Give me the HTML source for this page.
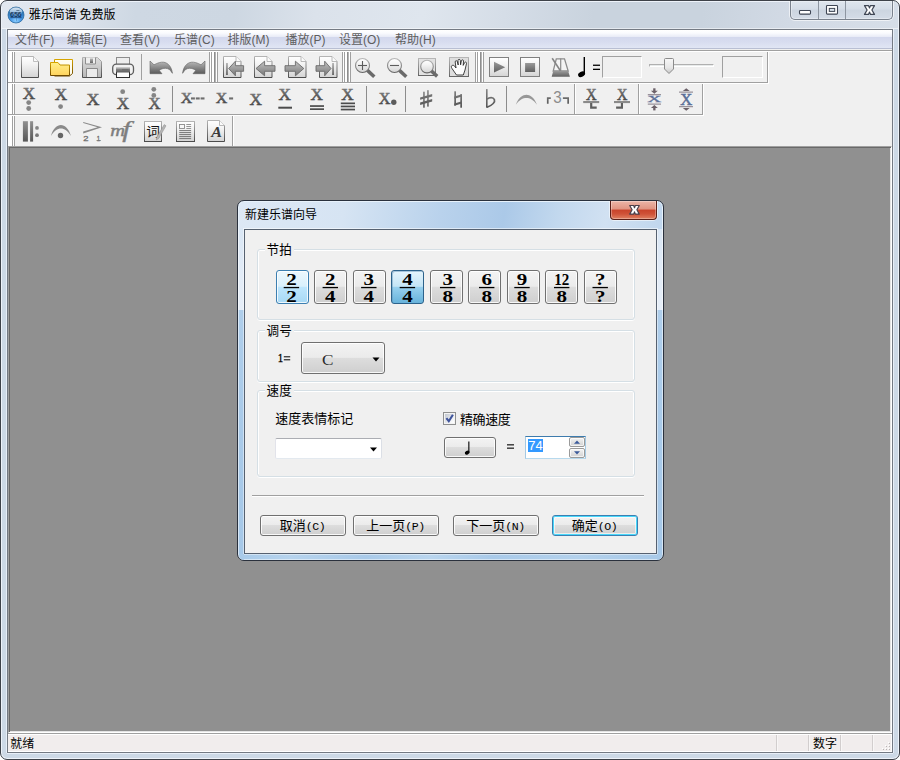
<!DOCTYPE html><html><head><meta charset="utf-8"><title>UI</title><style>
html,body{margin:0;padding:0;background:#fff;}
body{width:900px;height:760px;overflow:hidden;position:relative;font-family:"Liberation Sans",sans-serif;}
#r{position:absolute;left:0;top:0;width:900px;height:760px;overflow:hidden;}
#r>div{position:absolute;}
#ov{position:absolute;left:0;top:0;}
#ov text{font-family:"Liberation Sans","Noto Sans CJK SC",sans-serif;}
#ov text.sf{font-family:"Liberation Serif","Noto Serif CJK SC",serif;}
#ov text.mn{font-family:"Liberation Mono","Noto Sans CJK SC",monospace;}
</style></head><body>
<div id="r"><div style="left:0px;top:0px;width:900px;height:760px;box-sizing:border-box;border:1px solid #3e4249;border-radius:7px;background:#cdd9e6;box-shadow:inset 0 0 0 1px #eef3fa;"></div>
<div style="left:2px;top:2px;width:896px;height:27px;border-radius:5px 5px 0 0;background:linear-gradient(97deg,#e2e8f0 0%,#dce3ec 8%,#ced8e3 15%,#cdd7e2 26%,#dbe2eb 35%,#dfe6ee 47%,#d5dde7 56%,#c9d3de 66%,#c9d3de 78%,#d2dae5 88%,#d6dee8 100%);"></div>
<div style="left:2px;top:28px;width:896px;height:1px;background:rgba(255,255,255,.5);"></div>
<div style="left:6px;top:29px;width:1px;height:724px;background:#e8eff8;"></div>
<div style="left:893px;top:29px;width:1px;height:724px;background:#e8eff8;"></div>
<div style="left:7px;top:753px;width:886px;height:1px;background:#e8eff8;"></div>
<div style="left:7px;top:29px;width:886px;height:724px;box-sizing:border-box;border:1px solid #747a83;background:#f0f0f0;"></div>
<div style="left:787px;top:1px;width:109px;height:22px;overflow:hidden;"><div style="position:absolute;left:3px;top:0;width:103px;height:19px;box-sizing:border-box;border:1px solid #7a828d;border-top:none;border-radius:0 0 5px 5px;background:linear-gradient(#dfe6ee,#d5dde7 45%,#ccd5e0 50%,#d4dce7);box-shadow:0 0 0 1px rgba(255,255,255,.6), inset 0 0 0 1px rgba(255,255,255,.35);"></div></div>
<div style="left:818px;top:1px;width:1px;height:18px;background:#8d95a0;"></div>
<div style="left:845px;top:1px;width:1px;height:18px;background:#8d95a0;"></div>
<div style="left:8px;top:30px;width:884px;height:20px;background:linear-gradient(#ffffff 0,#fafbfe 3px,#e7eaf6 7px,#d3d8ed 7.5px,#d9def0 13px,#e1e6f4 18px,#b9bfd3 18px,#b9bfd3 19px,#efefef 19px);"></div>
<div style="left:8px;top:50px;width:884px;height:1px;background:#a0a0a0;"></div>
<div style="left:8px;top:146px;width:884px;height:587px;box-sizing:border-box;background:#909090;border:1px solid;border-color:#a0a0a0 #fff #fff #a0a0a0;box-shadow:inset 1px 1px 0 0 #696969, inset -1px -1px 0 0 #e3e3e3;"></div>
<div style="left:8px;top:733px;width:884px;height:19px;background:#f1eded;border-top:1px solid #a0a0a0;box-shadow:inset 0 1px 0 0 #fff;box-sizing:border-box;"></div>
<div style="left:237px;top:200px;width:427px;height:361px;box-sizing:border-box;border:1px solid #2a313d;border-radius:7px;background:linear-gradient(100deg,#dde8f5 0%,#d6e4f3 22%,#b9d2ec 42%,#abc9e8 55%,#c2d8ee 66%,#d1e1f2 76%,#c0d6ed 88%,#b4cfea 100%);box-shadow:inset 0 0 0 1px #e8f2fb;"></div>
<div style="left:244px;top:229px;width:413px;height:325px;box-sizing:border-box;border:1px solid #566170;background:#f0f0f0;box-shadow:0 0 0 1px rgba(255,255,255,.55);"></div>
<div style="left:238px;top:229px;width:6px;height:81px;background:linear-gradient(#d9e6f4,#e3ecf7 60%,#e6eef8);"></div>
<div style="left:238px;top:310px;width:6px;height:244px;background:linear-gradient(#afceeb,#a9cae9 50%,#a6c8e8);"></div>
<div style="left:657px;top:229px;width:6px;height:81px;background:linear-gradient(#d9e6f4,#e3ecf7 60%,#e6eef8);"></div>
<div style="left:657px;top:310px;width:6px;height:244px;background:linear-gradient(#afceeb,#a9cae9 50%,#a6c8e8);"></div>
<div style="left:239px;top:554px;width:423px;height:6px;background:linear-gradient(90deg,#a8cae9 0%,#b6d3ed 12%,#a9cae9 30%,#b9d5ee 45%,#a9cae9 60%,#b3d1ec 80%,#a8c9e8 100%);border-radius:0 0 5px 5px;"></div>
<div style="left:238px;top:229px;width:1px;height:325px;background:rgba(255,255,255,.55);"></div>
<div style="left:662px;top:229px;width:1px;height:325px;background:rgba(255,255,255,.55);"></div>
<div style="left:243px;top:229px;width:1px;height:325px;background:rgba(255,255,255,.45);"></div>
<div style="left:657px;top:229px;width:1px;height:325px;background:rgba(255,255,255,.45);"></div>
<div style="left:244px;top:559px;width:413px;height:1px;background:rgba(255,255,255,.5);"></div>
<div style="left:244px;top:554px;width:413px;height:1px;background:rgba(255,255,255,.45);"></div>
<div style="left:776px;top:735px;width:1px;height:16px;background:#d2cece;"></div>
<div style="left:777px;top:735px;width:1px;height:16px;background:#f8f6f6;"></div>
<div style="left:808px;top:735px;width:1px;height:16px;background:#d2cece;"></div>
<div style="left:809px;top:735px;width:1px;height:16px;background:#f8f6f6;"></div>
<div style="left:840px;top:735px;width:1px;height:16px;background:#d2cece;"></div>
<div style="left:841px;top:735px;width:1px;height:16px;background:#f8f6f6;"></div>
<div style="left:872px;top:735px;width:1px;height:16px;background:#d2cece;"></div>
<div style="left:873px;top:735px;width:1px;height:16px;background:#f8f6f6;"></div>
<div style="left:891px;top:734px;width:1px;height:18px;background:#fff;"></div>
<div style="left:8px;top:751px;width:884px;height:1px;background:#fff;"></div>
<div style="left:888px;top:742px;width:1px;height:1px;background:#fff;"></div>
<div style="left:889px;top:743px;width:1px;height:1px;background:#b8b4b4;"></div>
<div style="left:885px;top:745px;width:1px;height:1px;background:#fff;"></div>
<div style="left:886px;top:746px;width:1px;height:1px;background:#b8b4b4;"></div>
<div style="left:888px;top:745px;width:1px;height:1px;background:#fff;"></div>
<div style="left:889px;top:746px;width:1px;height:1px;background:#b8b4b4;"></div>
<div style="left:882px;top:748px;width:1px;height:1px;background:#fff;"></div>
<div style="left:883px;top:749px;width:1px;height:1px;background:#b8b4b4;"></div>
<div style="left:885px;top:748px;width:1px;height:1px;background:#fff;"></div>
<div style="left:886px;top:749px;width:1px;height:1px;background:#b8b4b4;"></div>
<div style="left:888px;top:748px;width:1px;height:1px;background:#fff;"></div>
<div style="left:889px;top:749px;width:1px;height:1px;background:#b8b4b4;"></div>
<div style="left:8px;top:50px;width:884px;height:1px;background:#a0a0a0;"></div>
<div style="left:8px;top:51px;width:884px;height:1px;background:#fff;"></div>
<div style="left:8px;top:82px;width:760px;height:1px;background:#a0a0a0;"></div>
<div style="left:8px;top:83px;width:761px;height:1px;background:#fff;"></div>
<div style="left:8px;top:114px;width:695px;height:1px;background:#a0a0a0;"></div>
<div style="left:8px;top:115px;width:696px;height:1px;background:#fff;"></div>
<div style="left:8px;top:52px;width:4px;height:30px;background:#fff;"></div>
<div style="left:12px;top:52px;width:1px;height:30px;background:#a0a0a0;"></div>
<div style="left:13px;top:52px;width:1px;height:30px;background:#fff;"></div>
<div style="left:14px;top:52px;width:1px;height:30px;background:#a0a0a0;"></div>
<div style="left:8px;top:84px;width:4px;height:30px;background:#fff;"></div>
<div style="left:12px;top:84px;width:1px;height:30px;background:#a0a0a0;"></div>
<div style="left:13px;top:84px;width:1px;height:30px;background:#fff;"></div>
<div style="left:14px;top:84px;width:1px;height:30px;background:#a0a0a0;"></div>
<div style="left:8px;top:116px;width:4px;height:30px;background:#fff;"></div>
<div style="left:12px;top:116px;width:1px;height:30px;background:#a0a0a0;"></div>
<div style="left:13px;top:116px;width:1px;height:30px;background:#fff;"></div>
<div style="left:14px;top:116px;width:1px;height:30px;background:#a0a0a0;"></div>
<div style="left:209px;top:52px;width:1px;height:30px;background:#a0a0a0;"></div>
<div style="left:210px;top:52px;width:1px;height:30px;background:#fff;"></div>
<div style="left:211px;top:52px;width:1px;height:30px;background:#a0a0a0;"></div>
<div style="left:212px;top:52px;width:2px;height:30px;background:#fff;"></div>
<div style="left:214px;top:52px;width:1px;height:30px;background:#8e8e8e;"></div>
<div style="left:215px;top:52px;width:1px;height:30px;background:#b4b4b4;"></div>
<div style="left:216px;top:52px;width:1px;height:30px;background:#fff;"></div>
<div style="left:217px;top:52px;width:1px;height:30px;background:#a0a0a0;"></div>
<div style="left:342px;top:52px;width:1px;height:30px;background:#a0a0a0;"></div>
<div style="left:343px;top:52px;width:1px;height:30px;background:#fff;"></div>
<div style="left:344px;top:52px;width:1px;height:30px;background:#a0a0a0;"></div>
<div style="left:345px;top:52px;width:2px;height:30px;background:#fff;"></div>
<div style="left:347px;top:52px;width:1px;height:30px;background:#8e8e8e;"></div>
<div style="left:348px;top:52px;width:1px;height:30px;background:#b4b4b4;"></div>
<div style="left:349px;top:52px;width:1px;height:30px;background:#fff;"></div>
<div style="left:350px;top:52px;width:1px;height:30px;background:#a0a0a0;"></div>
<div style="left:475px;top:52px;width:1px;height:30px;background:#a0a0a0;"></div>
<div style="left:476px;top:52px;width:1px;height:30px;background:#fff;"></div>
<div style="left:477px;top:52px;width:1px;height:30px;background:#a0a0a0;"></div>
<div style="left:478px;top:52px;width:2px;height:30px;background:#fff;"></div>
<div style="left:480px;top:52px;width:1px;height:30px;background:#8e8e8e;"></div>
<div style="left:481px;top:52px;width:1px;height:30px;background:#b4b4b4;"></div>
<div style="left:482px;top:52px;width:1px;height:30px;background:#fff;"></div>
<div style="left:483px;top:52px;width:1px;height:30px;background:#a0a0a0;"></div>
<div style="left:767px;top:52px;width:1px;height:31px;background:#a0a0a0;"></div>
<div style="left:768px;top:52px;width:1px;height:32px;background:#fff;"></div>
<div style="left:702px;top:84px;width:1px;height:31px;background:#a0a0a0;"></div>
<div style="left:703px;top:84px;width:1px;height:32px;background:#fff;"></div>
<div style="left:232px;top:116px;width:1px;height:30px;background:#a0a0a0;"></div>
<div style="left:233px;top:116px;width:1px;height:30px;background:#fff;"></div>
<div style="left:141px;top:54px;width:1px;height:26px;background:#a0a0a0;"></div>
<div style="left:172px;top:86px;width:1px;height:26px;background:#8c8c8c;"></div>
<div style="left:366px;top:86px;width:1px;height:26px;background:#8c8c8c;"></div>
<div style="left:405px;top:86px;width:1px;height:26px;background:#8c8c8c;"></div>
<div style="left:506px;top:86px;width:1px;height:26px;background:#8c8c8c;"></div>
<div style="left:574px;top:84px;width:1px;height:30px;background:#a0a0a0;"></div>
<div style="left:575px;top:84px;width:1px;height:30px;background:#fff;"></div>
<div style="left:638px;top:84px;width:1px;height:30px;background:#a0a0a0;"></div>
<div style="left:639px;top:84px;width:1px;height:30px;background:#fff;"></div>
<div style="left:602px;top:56px;width:40px;height:22px;box-sizing:border-box;border:1px solid;border-color:#a0a0a0 #fff #fff #a0a0a0;"></div>
<div style="left:722px;top:56px;width:41px;height:22px;box-sizing:border-box;border:1px solid;border-color:#a0a0a0 #fff #fff #a0a0a0;"></div>
<div style="left:649px;top:64px;width:65px;height:3px;box-sizing:border-box;border:1px solid;border-color:#b0b0b0 #fff #fff #b0b0b0;background:#e7eaea;"></div>
<div style="left:257px;top:250px;width:378px;height:71px;box-sizing:border-box;border:1px solid #fff;border-radius:3px;"></div>
<div style="left:258px;top:252px;width:1px;height:65px;background:#fff;"></div>
<div style="left:633px;top:252px;width:1px;height:65px;background:#fff;"></div>
<div style="left:257px;top:249px;width:378px;height:71px;box-sizing:border-box;border:1px solid #d5dfe5;border-radius:3px;"></div>
<div style="left:257px;top:331px;width:378px;height:52px;box-sizing:border-box;border:1px solid #fff;border-radius:3px;"></div>
<div style="left:258px;top:333px;width:1px;height:46px;background:#fff;"></div>
<div style="left:633px;top:333px;width:1px;height:46px;background:#fff;"></div>
<div style="left:257px;top:330px;width:378px;height:52px;box-sizing:border-box;border:1px solid #d5dfe5;border-radius:3px;"></div>
<div style="left:257px;top:391px;width:378px;height:87px;box-sizing:border-box;border:1px solid #fff;border-radius:3px;"></div>
<div style="left:258px;top:393px;width:1px;height:81px;background:#fff;"></div>
<div style="left:633px;top:393px;width:1px;height:81px;background:#fff;"></div>
<div style="left:257px;top:390px;width:378px;height:87px;box-sizing:border-box;border:1px solid #d5dfe5;border-radius:3px;"></div>
<div style="left:265px;top:243px;width:29px;height:13px;background:#f0f0f0;"></div>
<div style="left:265px;top:324px;width:29px;height:13px;background:#f0f0f0;"></div>
<div style="left:265px;top:384px;width:29px;height:13px;background:#f0f0f0;"></div>
<div style="left:276px;top:270px;width:33px;height:34px;box-sizing:border-box;border-radius:3px;border:1px solid #3c7fb1;background:linear-gradient(#ecf7fd 0%,#d9f0fc 48%,#bee6fd 50%,#a7d9f5 100%);box-shadow:inset 0 0 0 1px rgba(255,255,255,.8);"></div>
<div style="left:314px;top:270px;width:33px;height:34px;box-sizing:border-box;border-radius:3px;border:1px solid #707070;background:linear-gradient(#f3f3f3 0%,#ebebeb 48%,#dddddd 50%,#cfcfcf 100%);box-shadow:inset 0 0 0 1px rgba(255,255,255,.85);"></div>
<div style="left:353px;top:270px;width:33px;height:34px;box-sizing:border-box;border-radius:3px;border:1px solid #707070;background:linear-gradient(#f3f3f3 0%,#ebebeb 48%,#dddddd 50%,#cfcfcf 100%);box-shadow:inset 0 0 0 1px rgba(255,255,255,.85);"></div>
<div style="left:391px;top:270px;width:33px;height:34px;box-sizing:border-box;border-radius:3px;border:1px solid #2c628b;background:linear-gradient(#e5f4fc 0%,#c4e5f6 48%,#98d1ef 50%,#68b3db 100%);box-shadow:inset 1px 1px 0 0 rgba(90,140,180,.45);"></div>
<div style="left:430px;top:270px;width:33px;height:34px;box-sizing:border-box;border-radius:3px;border:1px solid #707070;background:linear-gradient(#f3f3f3 0%,#ebebeb 48%,#dddddd 50%,#cfcfcf 100%);box-shadow:inset 0 0 0 1px rgba(255,255,255,.85);"></div>
<div style="left:468px;top:270px;width:33px;height:34px;box-sizing:border-box;border-radius:3px;border:1px solid #707070;background:linear-gradient(#f3f3f3 0%,#ebebeb 48%,#dddddd 50%,#cfcfcf 100%);box-shadow:inset 0 0 0 1px rgba(255,255,255,.85);"></div>
<div style="left:507px;top:270px;width:33px;height:34px;box-sizing:border-box;border-radius:3px;border:1px solid #707070;background:linear-gradient(#f3f3f3 0%,#ebebeb 48%,#dddddd 50%,#cfcfcf 100%);box-shadow:inset 0 0 0 1px rgba(255,255,255,.85);"></div>
<div style="left:545px;top:270px;width:33px;height:34px;box-sizing:border-box;border-radius:3px;border:1px solid #707070;background:linear-gradient(#f3f3f3 0%,#ebebeb 48%,#dddddd 50%,#cfcfcf 100%);box-shadow:inset 0 0 0 1px rgba(255,255,255,.85);"></div>
<div style="left:584px;top:270px;width:33px;height:34px;box-sizing:border-box;border-radius:3px;border:1px solid #707070;background:linear-gradient(#f3f3f3 0%,#ebebeb 48%,#dddddd 50%,#cfcfcf 100%);box-shadow:inset 0 0 0 1px rgba(255,255,255,.85);"></div>
<div style="left:301px;top:342px;width:84px;height:32px;box-sizing:border-box;border-radius:3px;border:1px solid #707070;background:linear-gradient(#f3f3f3 0%,#ebebeb 48%,#dddddd 50%,#cfcfcf 100%);box-shadow:inset 0 0 0 1px rgba(255,255,255,.85);"></div>
<div style="left:275px;top:438px;width:107px;height:21px;box-sizing:border-box;border-radius:2px;background:#fff;border:1px solid;border-color:#abadb3 #dbdfe6 #e3e9ef #e2e3ea;"></div>
<div style="left:443px;top:412px;width:13px;height:13px;box-sizing:border-box;border:1px solid #8e8f8f;background:#f4f4f4;"></div>
<div style="left:445px;top:414px;width:9px;height:9px;background:linear-gradient(135deg,#c3c8d1 0%,#dfe2e7 45%,#f7f8fa 80%,#fff 100%);"></div>
<div style="left:444px;top:437px;width:52px;height:21px;box-sizing:border-box;border-radius:3px;border:1px solid #707070;background:linear-gradient(#f3f3f3 0%,#ebebeb 48%,#dddddd 50%,#cfcfcf 100%);box-shadow:inset 0 0 0 1px rgba(255,255,255,.85);"></div>
<div style="left:525px;top:436px;width:61px;height:23px;box-sizing:border-box;background:#fff;border:1px solid;border-color:#3d7bad #a4c9e3 #b7d9ed #a4c9e3;"></div>
<div style="left:528px;top:439px;width:15px;height:13px;background:#3399ff;"></div>
<div style="left:569px;top:437px;width:16px;height:10px;box-sizing:border-box;border:1px solid #9a9a9a;border-radius:2px;background:linear-gradient(#f4f4f4,#e2e2e2 50%,#d2d2d2);box-shadow:inset 0 0 0 1px rgba(255,255,255,.7);"></div>
<div style="left:569px;top:448px;width:16px;height:10px;box-sizing:border-box;border:1px solid #9a9a9a;border-radius:2px;background:linear-gradient(#f4f4f4,#e2e2e2 50%,#d2d2d2);box-shadow:inset 0 0 0 1px rgba(255,255,255,.7);"></div>
<div style="left:252px;top:495px;width:392px;height:1px;background:#a0a0a0;"></div>
<div style="left:252px;top:496px;width:392px;height:1px;background:#fff;"></div>
<div style="left:260px;top:515px;width:86px;height:21px;box-sizing:border-box;border-radius:3px;border:1px solid #707070;background:linear-gradient(#f3f3f3 0%,#ebebeb 48%,#dddddd 50%,#cfcfcf 100%);box-shadow:inset 0 0 0 1px rgba(255,255,255,.85);"></div>
<div style="left:353px;top:515px;width:86px;height:21px;box-sizing:border-box;border-radius:3px;border:1px solid #707070;background:linear-gradient(#f3f3f3 0%,#ebebeb 48%,#dddddd 50%,#cfcfcf 100%);box-shadow:inset 0 0 0 1px rgba(255,255,255,.85);"></div>
<div style="left:453px;top:515px;width:86px;height:21px;box-sizing:border-box;border-radius:3px;border:1px solid #707070;background:linear-gradient(#f3f3f3 0%,#ebebeb 48%,#dddddd 50%,#cfcfcf 100%);box-shadow:inset 0 0 0 1px rgba(255,255,255,.85);"></div>
<div style="left:552px;top:515px;width:86px;height:21px;box-sizing:border-box;border-radius:3px;border:1px solid #3c7fb1;background:linear-gradient(#f3f3f3 0%,#ebebeb 48%,#dddddd 50%,#cfcfcf 100%);box-shadow:inset 0 0 0 1px #48d8fb, inset 0 0 0 2px rgba(255,255,255,.6);"></div>
<div style="left:607px;top:201px;width:53px;height:22px;overflow:hidden;"><div style="position:absolute;left:3px;top:0;width:47px;height:19px;box-sizing:border-box;border:1px solid #5a1f18;border-top:none;border-radius:0 0 4px 4px;background:linear-gradient(#ecb5a7 0%,#e09482 45%,#c9432b 50%,#cf5238 72%,#df8062 100%);box-shadow:0 0 0 1px rgba(255,255,255,.55), inset 0 0 0 1px rgba(255,255,255,.3);"></div></div></div>
<svg id="ov" width="900" height="760" viewBox="0 0 900 760"><g fill="#000" font-size="12"><text x="28.8" y="19">雅乐简谱</text><text x="79.5" y="19">免费版</text></g>
<g fill="#5e5e5e" font-size="12"><text x="15" y="44">文件(F)</text>
<text x="67" y="44">编辑(E)</text>
<text x="120" y="44">查看(V)</text>
<text x="174" y="44">乐谱(C)</text>
<text x="227.5" y="44">排版(M)</text>
<text x="285.5" y="44">播放(P)</text>
<text x="339" y="44">设置(O)</text>
<text x="395" y="44">帮助(H)</text></g>
<text x="10.3" y="748" font-size="12" fill="#000">就绪</text>
<text x="813" y="748" font-size="12" fill="#000">数字</text>
<text x="245" y="218.8" font-size="12" fill="#000">新建乐谱向导</text>
<defs><linearGradient id="thumb" x1="0" y1="0" x2="0" y2="1"><stop offset="0" stop-color="#f7f7f7"/><stop offset=".6" stop-color="#e6e6e6"/><stop offset="1" stop-color="#c8c8c8"/></linearGradient></defs>
<path d="M665.5 58.5h7a1 1 0 0 1 1 1v9.5l-4.5 4.5l-4.5-4.5v-9.5a1 1 0 0 1 1-1z" fill="url(#thumb)" stroke="#8b8b8b"/>
<defs>
<linearGradient id="gk" x1="0" y1="0" x2="0" y2="1"><stop offset="0" stop-color="#b4b4b4"/><stop offset="1" stop-color="#4c4c4c"/></linearGradient>
<linearGradient id="gf" x1="0" y1="0" x2="0" y2="1"><stop offset="0" stop-color="#ffffff"/><stop offset=".35" stop-color="#f4f4f4"/><stop offset="1" stop-color="#d4d4d4"/></linearGradient>
<linearGradient id="gm" x1="0" y1="0" x2="0" y2="1"><stop offset="0" stop-color="#b6b6b6"/><stop offset="1" stop-color="#666666"/></linearGradient>
<linearGradient id="gm2" x1="0" y1="0" x2="0" y2="1"><stop offset="0" stop-color="#9a9a9a"/><stop offset="1" stop-color="#606060"/></linearGradient>
<linearGradient id="gbody" x1="0" y1="0" x2="0" y2="1"><stop offset="0" stop-color="#dcdcdc"/><stop offset="1" stop-color="#b8b8b8"/></linearGradient>
<linearGradient id="fo" x1="0" y1="0" x2="0" y2="1"><stop offset="0" stop-color="#d6a400"/><stop offset="1" stop-color="#6e4a00"/></linearGradient>
<linearGradient id="ff" x1="0" y1="0" x2="0" y2="1"><stop offset="0" stop-color="#ffef8a"/><stop offset="1" stop-color="#ffd45e"/></linearGradient>
<linearGradient id="gu" x1="0" y1="0" x2="0" y2="1"><stop offset="0" stop-color="#bcbcbc"/><stop offset="1" stop-color="#5a5a5a"/></linearGradient>
</defs>
<path d="M21.5 56.5h12l5 5v16h-17z" fill="url(#gf)" stroke="url(#gk)"/><path d="M33.5 56.5v5h5" fill="#fafafa" stroke="#b0b0b0" stroke-width=".8"/>
<path d="M54.5 59.5h18v14l-3 2.5h-15z" fill="#fffdf0" stroke="url(#fo)"/><path d="M50.5 62.5h7.5l2 2.5h9.5v10.5h-19z" fill="url(#ff)" stroke="url(#fo)"/>
<path d="M82.5 57.5h15l4 4v16h-19z" fill="url(#gbody)" stroke="url(#gk)"/><path d="M85.5 57.5v6.5h10v-6.5" fill="#eeeeee" stroke="#8e8e8e"/><rect x="90" y="58.5" width="3" height="4.5" fill="url(#gm)"/><path d="M86.5 77v-8.5h11v8.5" fill="#ebebeb" stroke="#8a8a8a"/>
<rect x="116.5" y="57.5" width="13" height="8.5" fill="#ededed" stroke="#8c8c8c"/><rect x="112.7" y="64.2" width="20.8" height="10.4" rx="3.6" fill="#f2f2f2" stroke="#5e5e5e" stroke-width="1.3"/><rect x="116.5" y="71.8" width="13" height="5.7" fill="#fcfcfc" stroke="#2e2e2e"/><rect x="116" y="67.2" width="14" height="5" fill="url(#gm2)"/><rect x="116" y="67.2" width="14" height="1.2" fill="#d0d0d0"/><rect x="122" y="69.2" width="6.5" height="1.2" fill="#6a6a6a"/>
<path d="M150 61 L154 64.8 C158 62.6 161 62 163.5 62.2 C168 62.8 171.6 66.5 172.4 73.3 C170.5 70 168.5 68.3 165.3 68.3 C163 68.3 161 69 159.3 70.5 L162 73.7 L150 73.7 Z" fill="url(#gu)" stroke="#626262" stroke-width=".6"/>
<g transform="translate(355 0) scale(-1 1)"><path d="M150 61 L154 64.8 C158 62.6 161 62 163.5 62.2 C168 62.8 171.6 66.5 172.4 73.3 C170.5 70 168.5 68.3 165.3 68.3 C163 68.3 161 69 159.3 70.5 L162 73.7 L150 73.7 Z" fill="url(#gu)" stroke="#626262" stroke-width=".6"/></g>
<defs><linearGradient id="garr" x1="0" y1="0" x2="0" y2="1"><stop offset="0" stop-color="#c4c4c4"/><stop offset="1" stop-color="#767676"/></linearGradient></defs>
<path d="M223.5 56.5h12.5l5 5v16h-17.5z" fill="url(#gf)" stroke="url(#gk)"/><path d="M236 56.5v5h5" fill="#fbfbfb" stroke="#a8a8a8" stroke-width=".8"/>
<rect x="226" y="63" width="1.9" height="12" fill="url(#gm)"/>
<path d="M228.7 68.5L235.4 61.2V65.7H243.6V71.3H235.4V75.8Z" fill="url(#garr)" stroke="#6a6a6a" stroke-width=".9" stroke-linejoin="round"/>
<path d="M254.5 56.5h12.5l5 5v16h-17.5z" fill="url(#gf)" stroke="url(#gk)"/><path d="M267 56.5v5h5" fill="#fbfbfb" stroke="#a8a8a8" stroke-width=".8"/>
<path d="M256 68.5L264.6 61.2V65.7H275V71.3H264.6V75.8Z" fill="url(#garr)" stroke="#6a6a6a" stroke-width=".9" stroke-linejoin="round"/>
<path d="M288.5 56.5h12.5l5 5v16h-17.5z" fill="url(#gf)" stroke="url(#gk)"/><path d="M301 56.5v5h5" fill="#fbfbfb" stroke="#a8a8a8" stroke-width=".8"/>
<path d="M303.8 68.5L295.4 61.2V65.7H285V71.3H295.4V75.8Z" fill="url(#garr)" stroke="#6a6a6a" stroke-width=".9" stroke-linejoin="round"/>
<path d="M319.5 56.5h12.5l5 5v16h-17.5z" fill="url(#gf)" stroke="url(#gk)"/><path d="M332 56.5v5h5" fill="#fbfbfb" stroke="#a8a8a8" stroke-width=".8"/>
<path d="M331 68.5L324.7 61.2V65.7H316V71.3H324.7V75.8Z" fill="url(#garr)" stroke="#6a6a6a" stroke-width=".9" stroke-linejoin="round"/>
<rect x="332.1" y="63" width="1.9" height="12" fill="url(#gm)"/>
<line x1="367.15" y1="70.15" x2="374.3" y2="76.8" stroke="#6a6a6a" stroke-width="3.5"/><circle cx="362.5" cy="65.5" r="7" fill="url(#gf)" stroke="url(#gm)" stroke-width="1.1"/><path d="M358 65.5h9" stroke="#5c5c5c" stroke-width="1.1"/><path d="M362.5 61v9" stroke="#5c5c5c" stroke-width="1.1"/>
<line x1="399.15" y1="70.15" x2="406.3" y2="76.8" stroke="#6a6a6a" stroke-width="3.5"/><circle cx="394.5" cy="65.5" r="7" fill="url(#gf)" stroke="url(#gm)" stroke-width="1.1"/><path d="M390 65.5h9" stroke="#5c5c5c" stroke-width="1.1"/>
<rect x="418.5" y="58.5" width="17" height="17" fill="#e2e2e2" stroke="url(#gm)"/>
<line x1="431.216" y1="70.816" x2="437.2" y2="76.4" stroke="#6a6a6a" stroke-width="3.5"/><circle cx="427" cy="66.6" r="6.3" fill="url(#gf)" stroke="url(#gm)" stroke-width="1.1"/>
<rect x="449.5" y="57.5" width="19" height="19" fill="#dedede" stroke="url(#gm)"/>
<path d="M456.5 75 L452 68.5 C451 67 451.2 65.8 452.3 65.4 C453.4 65 454.4 65.6 455.2 66.8 L456 68 L455.2 62 C455 60.6 456.8 60.2 457.3 61.5 L458.2 65 L458 60.4 C458 59 460.2 59 460.3 60.4 L460.6 64.8 L461.4 60.6 C461.7 59.4 463.6 59.7 463.5 61 L463.2 65.4 L464.6 62.6 C465.2 61.6 466.8 62.2 466.5 63.4 L465 70 L463.3 75 Z" fill="#fdfdfd" stroke="#222" stroke-width=".85" stroke-linejoin="round"/>
<rect x="489.5" y="57.5" width="19" height="19" fill="url(#gf)" stroke="#808080"/>
<path d="M494 61.8V72.4L505.2 67.2Z" fill="url(#gm2)"/>
<rect x="520.5" y="57.5" width="19" height="19" fill="url(#gf)" stroke="#808080"/>
<rect x="525.1" y="63" width="10" height="9" fill="url(#gm2)"/>
<path d="M556.3 58.8H564.5L568.2 71H553.2Z" fill="#f4f4f4" stroke="#8c8c8c" stroke-width="1.3"/>
<path d="M560.7 58.5V71" stroke="#8c8c8c" stroke-width="1.2"/>
<path d="M553.2 71H568.2L569.9 76.8H551.7Z" fill="url(#gm2)"/>
<path d="M552.2 58.3L560.4 70.8" stroke="#858585" stroke-width="1.6"/>
<ellipse cx="581.6" cy="74.3" rx="3.7" ry="2.5" transform="rotate(-28 581.6 74.3)" fill="#000"/><rect x="583.6" y="57" width="1.4" height="17.3" fill="#000"/>
<rect x="593" y="64.6" width="7" height="1.3" fill="#000"/><rect x="593" y="68.7" width="7" height="1.3" fill="#000"/>
<defs>
<linearGradient id="gx" gradientUnits="userSpaceOnUse" x1="0" y1="86" x2="0" y2="112"><stop offset="0" stop-color="#8c8c8c"/><stop offset="1" stop-color="#484848"/></linearGradient>
<linearGradient id="gx3" gradientUnits="userSpaceOnUse" x1="0" y1="118" x2="0" y2="144"><stop offset="0" stop-color="#9a9a9a"/><stop offset="1" stop-color="#505050"/></linearGradient>
<linearGradient id="gxo" x1="0" y1="0" x2="0" y2="1"><stop offset="0" stop-color="#868686"/><stop offset="1" stop-color="#3a3a3a"/></linearGradient>
</defs>
<text class="sf" transform="translate(22.72 98.90) scale(1.04 1)" font-size="16.49" fill="url(#gxo)" stroke="url(#gxo)" stroke-width=".56">X</text>
<circle cx="28.7" cy="102.6" r="2.4" fill="#858585"/>
<circle cx="28.7" cy="108.5" r="2.4" fill="#858585"/>
<text class="sf" transform="translate(54.72 99.60) scale(1.04 1)" font-size="16.49" fill="url(#gxo)" stroke="url(#gxo)" stroke-width=".56">X</text>
<circle cx="60.6" cy="106.6" r="2.4" fill="#858585"/>
<text class="sf" transform="translate(86.51 104.50) scale(1.0365 1)" font-size="17.26" fill="url(#gxo)" stroke="url(#gxo)" stroke-width=".59">X</text>
<text class="sf" transform="translate(116.82 108.60) scale(1.04 1)" font-size="16.49" fill="url(#gxo)" stroke="url(#gxo)" stroke-width=".56">X</text>
<circle cx="122.7" cy="91.7" r="2.4" fill="#858585"/>
<text class="sf" transform="translate(148.43 109.40) scale(1.052 1)" font-size="15.88" fill="url(#gxo)" stroke="url(#gxo)" stroke-width=".54">X</text>
<circle cx="153.8" cy="89.3" r="2.4" fill="#858585"/>
<circle cx="153.8" cy="95.4" r="2.4" fill="#858585"/>
<text class="sf" transform="translate(180.85 103.20) scale(1.102 1)" font-size="14.36" fill="url(#gxo)" stroke="url(#gxo)" stroke-width=".49">X</text>
<rect x="191" y="97.4" width="3.9" height="2.1" fill="#6e6e6e"/>
<rect x="195.8" y="97.4" width="3.9" height="2.1" fill="#6e6e6e"/>
<rect x="200.6" y="97.4" width="3.9" height="2.1" fill="#6e6e6e"/>
<text class="sf" transform="translate(215.75 103.20) scale(1.113 1)" font-size="14.36" fill="url(#gxo)" stroke="url(#gxo)" stroke-width=".49">X</text>
<rect x="229.1" y="97.4" width="4" height="2.1" fill="#6e6e6e"/>
<text class="sf" transform="translate(249.62 104.60) scale(0.994 1)" font-size="17.26" fill="url(#gxo)" stroke="url(#gxo)" stroke-width=".59">X</text>
<text class="sf" transform="translate(278.62 100.10) scale(1.04 1)" font-size="16.49" fill="url(#gxo)" stroke="url(#gxo)" stroke-width=".56">X</text>
<rect x="278.3" y="106.7" width="13.7" height="2" fill="#4c4c4c"/>
<text class="sf" transform="translate(310.42 100.10) scale(1.04 1)" font-size="16.49" fill="url(#gxo)" stroke="url(#gxo)" stroke-width=".56">X</text>
<rect x="310" y="105.2" width="14" height="1.7" fill="#4c4c4c"/>
<rect x="310" y="108.3" width="14" height="1.7" fill="#4c4c4c"/>
<text class="sf" transform="translate(341.32 100.10) scale(1.04 1)" font-size="16.49" fill="url(#gxo)" stroke="url(#gxo)" stroke-width=".56">X</text>
<rect x="340.8" y="102.5" width="14.2" height="1.7" fill="#4c4c4c"/>
<rect x="340.8" y="105.6" width="14.2" height="1.7" fill="#4c4c4c"/>
<rect x="340.8" y="108.7" width="14.2" height="1.7" fill="#4c4c4c"/>
<text class="sf" transform="translate(378.65 104.30) scale(0.96 1)" font-size="16.8" fill="url(#gxo)" stroke="url(#gxo)" stroke-width=".57">X</text>
<circle cx="393.8" cy="102.3" r="2.7" fill="#5c5c5c"/>
<rect x="423.2" y="91.7" width="1.5" height="16" fill="url(#gx)"/>
<rect x="427.2" y="90.2" width="1.5" height="16.4" fill="url(#gx)"/>
<path d="M420.1 97.4L432.2 94.1V96.4L420.1 99.7Z" fill="url(#gx)" />
<path d="M420.1 102.6L432.2 99.1V101.4L420.1 104.9Z" fill="url(#gx)" />
<rect x="454.3" y="91.3" width="1.7" height="14.2" fill="url(#gx)"/>
<rect x="460.3" y="94.2" width="1.7" height="13.5" fill="url(#gx)"/>
<path d="M454.3 96.6L462 94.2V96.4L454.3 98.8Z" fill="url(#gx)" />
<path d="M454.3 103.6L462 101.2V103.4L454.3 105.8Z" fill="url(#gx)" />
<rect x="486" y="89.1" width="1.6" height="18.6" fill="url(#gx)"/>
<path d="M487 99.2C489.5 97.2 493.2 97 494.4 99.6C495.4 102.4 491.5 105.3 487 107.3" fill="none" stroke="url(#gx)" stroke-width="1.7" />
<path d="M515.8 104.8C518.6 97.4 522.8 94.8 526.4 94.8C530 94.8 534.2 97.4 537 104.8C533.3 99.8 530 98.1 526.4 98.1C522.8 98.1 519.5 99.8 515.8 104.8Z" fill="#979797" />
<path d="M546.9 103.7V97.3H550.8V99H548.6V103.7Z" fill="url(#gx)" />
<path d="M569 103.7V97.3H562.9V99H567.3V103.7Z" fill="url(#gx)" />
<text transform="translate(553.32 103.13) scale(0.896 1)" font-size="16.95" fill="#8c8c8c">3</text>
<text class="sf" transform="translate(586.08 99.50) scale(0.932 1)" font-size="15.73" fill="url(#gxo)" stroke="url(#gxo)" stroke-width=".53">X</text>
<rect x="583.2" y="101" width="16" height="2.1" fill="#8a8a8a"/>
<path d="M590.1 103V108.7H596.7V106.6H592.3V103Z" fill="#5e5e5e" />
<text class="sf" transform="translate(616.88 99.50) scale(0.9135 1)" font-size="15.73" fill="url(#gxo)" stroke="url(#gxo)" stroke-width=".53">X</text>
<rect x="614" y="101" width="16" height="2.1" fill="#8a8a8a"/>
<path d="M623 103V108.7H616.1V106.6H620.9V103Z" fill="#5e5e5e" />
<rect x="653.2" y="88.3" width="2.3" height="3" fill="#6b6068"/>
<path d="M650.9 90.8H657.8L654.35 93.7Z" fill="#6b6068" />
<rect x="647.8" y="94.2" width="13.2" height="1" fill="#857c86"/>
<rect x="647.8" y="103.6" width="13.2" height="1" fill="#857c86"/>
<text class="sf" transform="translate(647.17 102.30) scale(2.129 1)" font-size="9.16" fill="#5b6f98" stroke="#5b6f98" stroke-width=".27">X</text>
<path d="M650.9 108H657.8L654.35 105.1Z" fill="#6b6068" />
<rect x="653.2" y="107.8" width="2.3" height="2.6" fill="#6b6068"/>
<path d="M682.8 90.9H689.7L686.25 88.2Z" fill="#6b6068" />
<rect x="679" y="91.6" width="14" height="1" fill="#857c86"/>
<text class="sf" transform="translate(680.34 104.80) scale(1.014 1)" font-size="16.34" fill="#5b6f98" stroke="#5b6f98" stroke-width=".49">X</text>
<rect x="679" y="106.2" width="14" height="1" fill="#857c86"/>
<path d="M682.8 107.9H689.7L686.25 110.8Z" fill="#6b6068" />
<rect x="22.9" y="121.2" width="5" height="20.4" fill="url(#gx3)"/>
<rect x="30.1" y="121.2" width="3" height="20.4" fill="url(#gx3)"/>
<circle cx="37" cy="127.9" r="1.9" fill="#858585"/><circle cx="37" cy="135.2" r="1.9" fill="#7a7a7a"/>
<path d="M51 136C53 128.5 57 125 60.9 125C64.8 125 68.8 128.5 70.9 136C67.6 130.6 64.4 128.6 60.9 128.6C57.4 128.6 54.3 130.6 51 136Z" fill="#8a8a8a" />
<circle cx="60.5" cy="135.5" r="2.7" fill="#666"/>
<path d="M83.2 122L102 127.2L83.2 133.4V131.6L97.6 127.2L83.2 123Z" fill="#8a8a8a" />
<text transform="translate(83.23 140.90) scale(1.432 1)" font-size="6.59" fill="#6c6c6c" stroke="#6c6c6c" stroke-width=".26">2</text>
<text transform="translate(96.74 140.90) scale(0.901 1)" font-size="6.69" fill="#6c6c6c" stroke="#6c6c6c" stroke-width=".27">1</text>
<rect x="96.6" y="140.2" width="4.2" height="0.8" fill="#7c7c7c"/>
<text class="sf" transform="translate(110.36 135.90) scale(1.178 1)" font-size="17.4" font-style="italic" fill="#7e7e7e" stroke="#7e7e7e" stroke-width=".45">m</text>
<text class="sf" transform="translate(122.26 136.84) scale(1.359 1)" font-size="22.36" font-style="italic" fill="#7e7e7e" stroke="#7e7e7e" stroke-width=".31">f</text>
<rect x="144.5" y="121.5" width="17" height="20" fill="url(#gf)" stroke="url(#gk)"/>
<text transform="translate(146.24 136.28) scale(1.056 1)" font-size="13.02" fill="#111">词</text>
<path d="M164.2 124.6L166 125.8L158.6 138.6L156.3 139.9L156.6 137.4Z" fill="#b5b5b5" stroke="#8a8a8a" stroke-width=".5"/>
<rect x="176.5" y="121.5" width="18" height="20" fill="url(#gf)" stroke="url(#gk)"/>
<rect x="179.5" y="124.5" width="5" height="4" fill="#f8f8f8" stroke="#8a8a8a" stroke-width=".9"/>
<rect x="186.3" y="124.1" width="4.8" height="0.9" fill="#8a8a8a"/>
<rect x="186.3" y="126.1" width="4.8" height="0.9" fill="#8a8a8a"/>
<rect x="186.3" y="128.1" width="4.8" height="0.9" fill="#8a8a8a"/>
<rect x="179.2" y="130.1" width="11.9" height="1" fill="#747474"/>
<rect x="179.2" y="132.1" width="11.9" height="1" fill="#747474"/>
<rect x="179.2" y="134.1" width="11.9" height="1" fill="#747474"/>
<rect x="179.2" y="136.1" width="11.9" height="1" fill="#747474"/>
<rect x="179.2" y="138.1" width="11.9" height="1" fill="#747474"/>
<path d="M207.5 120.5h12l5 5v16h-17z" fill="url(#gf)" stroke="url(#gk)"/><path d="M219.5 120.5v5h5" fill="#fbfbfb" stroke="#a8a8a8" stroke-width=".8"/>
<text class="sf" transform="translate(211.33 136.80) scale(1.129 1)" font-size="14.24" font-style="italic" font-weight="bold" fill="#3a3a3a">A</text>
<text x="266.6" y="253.7" font-size="12.6" fill="#000">节拍</text>
<text x="266.6" y="334.7" font-size="12.6" fill="#000">调号</text>
<text x="266.6" y="394.7" font-size="12.6" fill="#000">速度</text>
<g class="ts" fill="#000" font-weight="bold" text-anchor="middle">
<rect x="283.7" y="286.9" width="15.4" height="1.3" fill="#000"/>
<text class="sf" transform="translate(291.4 285.2) scale(1.28 1)" font-size="16.4">2</text>
<text class="sf" transform="translate(291.4 301.9) scale(1.24 1)" font-size="17">2</text>
<rect x="322.6" y="286.9" width="15.4" height="1.3" fill="#000"/>
<text class="sf" transform="translate(330.3 285.2) scale(1.28 1)" font-size="16.4">2</text>
<text class="sf" transform="translate(330.3 301.9) scale(1.24 1)" font-size="17">4</text>
<rect x="361.1" y="286.9" width="15.4" height="1.3" fill="#000"/>
<text class="sf" transform="translate(368.8 285.2) scale(1.28 1)" font-size="16.4">3</text>
<text class="sf" transform="translate(368.8 301.9) scale(1.24 1)" font-size="17">4</text>
<rect x="399.7" y="286.9" width="15.4" height="1.3" fill="#000"/>
<text class="sf" transform="translate(407.4 285.2) scale(1.28 1)" font-size="16.4">4</text>
<text class="sf" transform="translate(407.4 301.9) scale(1.24 1)" font-size="17">4</text>
<rect x="440" y="286.9" width="15.4" height="1.3" fill="#000"/>
<text class="sf" transform="translate(447.7 285.2) scale(1.28 1)" font-size="16.4">3</text>
<text class="sf" transform="translate(447.7 301.9) scale(1.24 1)" font-size="17">8</text>
<rect x="479" y="286.9" width="15.4" height="1.3" fill="#000"/>
<text class="sf" transform="translate(486.7 285.2) scale(1.28 1)" font-size="16.4">6</text>
<text class="sf" transform="translate(486.7 301.9) scale(1.24 1)" font-size="17">8</text>
<rect x="514.3" y="286.9" width="15.4" height="1.3" fill="#000"/>
<text class="sf" transform="translate(522 285.2) scale(1.28 1)" font-size="16.4">9</text>
<text class="sf" transform="translate(522 301.9) scale(1.24 1)" font-size="17">8</text>
<rect x="554" y="286.9" width="15.4" height="1.3" fill="#000"/>
<text class="sf" transform="translate(561.7 285.2) scale(0.92 1)" font-size="16.4">12</text>
<text class="sf" transform="translate(561.7 301.9) scale(1.24 1)" font-size="17">8</text>
<rect x="592.5" y="286.9" width="15.4" height="1.3" fill="#000"/>
<text class="sf" transform="translate(600.2 285.2) scale(1.28 1)" font-size="16.4">?</text>
<text class="sf" transform="translate(600.2 301.9) scale(1.24 1)" font-size="17">?</text>
</g>
<text class="sf" transform="translate(277.65 362.00) scale(0.809 1)" font-size="13.33" fill="#000" stroke="#000" stroke-width=".33">1</text>
<rect x="283.8" y="356.3" width="6.4" height="1" fill="#000"/><rect x="283.8" y="359.3" width="6.4" height="1" fill="#000"/>
<text class="sf" transform="translate(322.00 364.95) scale(1.12 1)" font-size="15.33" fill="#2a2a2a">C</text>
<path d="M372.5 357.5h7l-3.5 4z" fill="#000"/>
<text x="275.3" y="423.4" font-size="13" fill="#000">速度表情标记</text>
<path d="M370 447.5h7l-3.5 4z" fill="#000"/>
<path d="M446.4 418.1L448.8 421.2L452.9 414.7" stroke="#3f549b" stroke-width="2.1" fill="none" stroke-linejoin="miter"/>
<text x="460" y="423.8" font-size="13" letter-spacing="-0.4" fill="#000">精确速度</text>
<ellipse cx="467.2" cy="452.6" rx="2.5" ry="1.8" transform="rotate(-28 467.2 452.6)" fill="#000"/><rect x="468.3" y="441.5" width="1.1" height="11.1" fill="#000"/>
<rect x="507" y="444.3" width="7" height="1.1" fill="#000"/><rect x="507" y="447.6" width="7" height="1.1" fill="#000"/>
<text x="528.3" y="450" font-size="13" fill="#fff">74</text>
<path d="M574 443.8l3-3.4l3 3.4z" fill="#3b5a9a"/><path d="M574 451.2l3 3.4l3-3.4z" fill="#3b5a9a"/>
<g fill="#000"><text x="279.75" y="530.3" font-size="13">取消</text><text class="mn" x="305.75" y="529.9" font-size="11.6" letter-spacing="-0.46">(C)</text></g>
<g fill="#000"><text x="366.25" y="530.3" font-size="13">上一页</text><text class="mn" x="405.25" y="529.9" font-size="11.6" letter-spacing="-0.46">(P)</text></g>
<g fill="#000"><text x="466.25" y="530.3" font-size="13">下一页</text><text class="mn" x="505.25" y="529.9" font-size="11.6" letter-spacing="-0.46">(N)</text></g>
<g fill="#000"><text x="571.75" y="530.3" font-size="13">确定</text><text class="mn" x="597.75" y="529.9" font-size="11.6" letter-spacing="-0.46">(O)</text></g>
<path d="M864.5 5.6 L868.5 5.6 L869.5 7.9 L870.5 5.6 L874.5 5.6 L871.9 10 L874.5 14.4 L870.5 14.4 L869.5 12.1 L868.5 14.4 L864.5 14.4 L867.1 10 Z" fill="#fff" stroke="#3f4654" stroke-width="1.2" stroke-linejoin="round"/>
<path d="M629.7 205.5 L633.7 205.5 L634.5 207.7 L635.3 205.5 L639.3 205.5 L636.9 209.8 L639.3 214.1 L635.3 214.1 L634.5 211.9 L633.7 214.1 L629.7 214.1 L632.1 209.8 Z" fill="#fff" stroke="#4a3f4a" stroke-width="1.2" stroke-linejoin="round"/>
<rect x="799.5" y="10.5" width="11" height="3.6" rx=".8" fill="#fff" stroke="#3f4654" stroke-width="1.1"/>
<rect x="826.5" y="5.5" width="11" height="8.6" rx=".8" fill="#fff" stroke="#3f4654" stroke-width="1.1"/><rect x="829.3" y="8.4" width="5.4" height="3" fill="#d9e1ea" stroke="#3f4654" stroke-width="1"/>
<defs>
<radialGradient id="sph" cx=".5" cy=".85" r=".9"><stop offset="0" stop-color="#8fd0ff"/><stop offset=".35" stop-color="#4a9be8"/><stop offset=".7" stop-color="#2f78b8"/><stop offset="1" stop-color="#1f5f95"/></radialGradient>
<linearGradient id="sphg" x1="0" y1="0" x2="0" y2="1"><stop offset="0" stop-color="#e6eef6" stop-opacity=".95"/><stop offset="1" stop-color="#a9c9e6" stop-opacity=".55"/></linearGradient>
</defs>
<circle cx="16" cy="15" r="8" fill="url(#sph)" stroke="#2a6a9f" stroke-width=".8"/>
<ellipse cx="16" cy="11.6" rx="6.3" ry="4.2" fill="url(#sphg)"/>
<rect x="10.2" y="12" width="11.6" height="5.6" rx="1" fill="#2d6fae" opacity=".3"/>
<text x="10.27 14.15 17.87" y="16.84" font-size="6.5" fill="#0a1d3c" stroke="#0a1d3c" stroke-width=".2" opacity=".85">656</text>
<rect x="10.5" y="17.3" width="11" height=".8" fill="#0f2a55" opacity=".8"/>
<rect x="16.2" y="9.9" width="3.4" height=".8" rx=".4" fill="#3a5068" opacity=".85"/>
<rect x="16.1" y="18.2" width=".6" height="3" fill="#2a66a0" opacity=".7"/></svg>
</body></html>
